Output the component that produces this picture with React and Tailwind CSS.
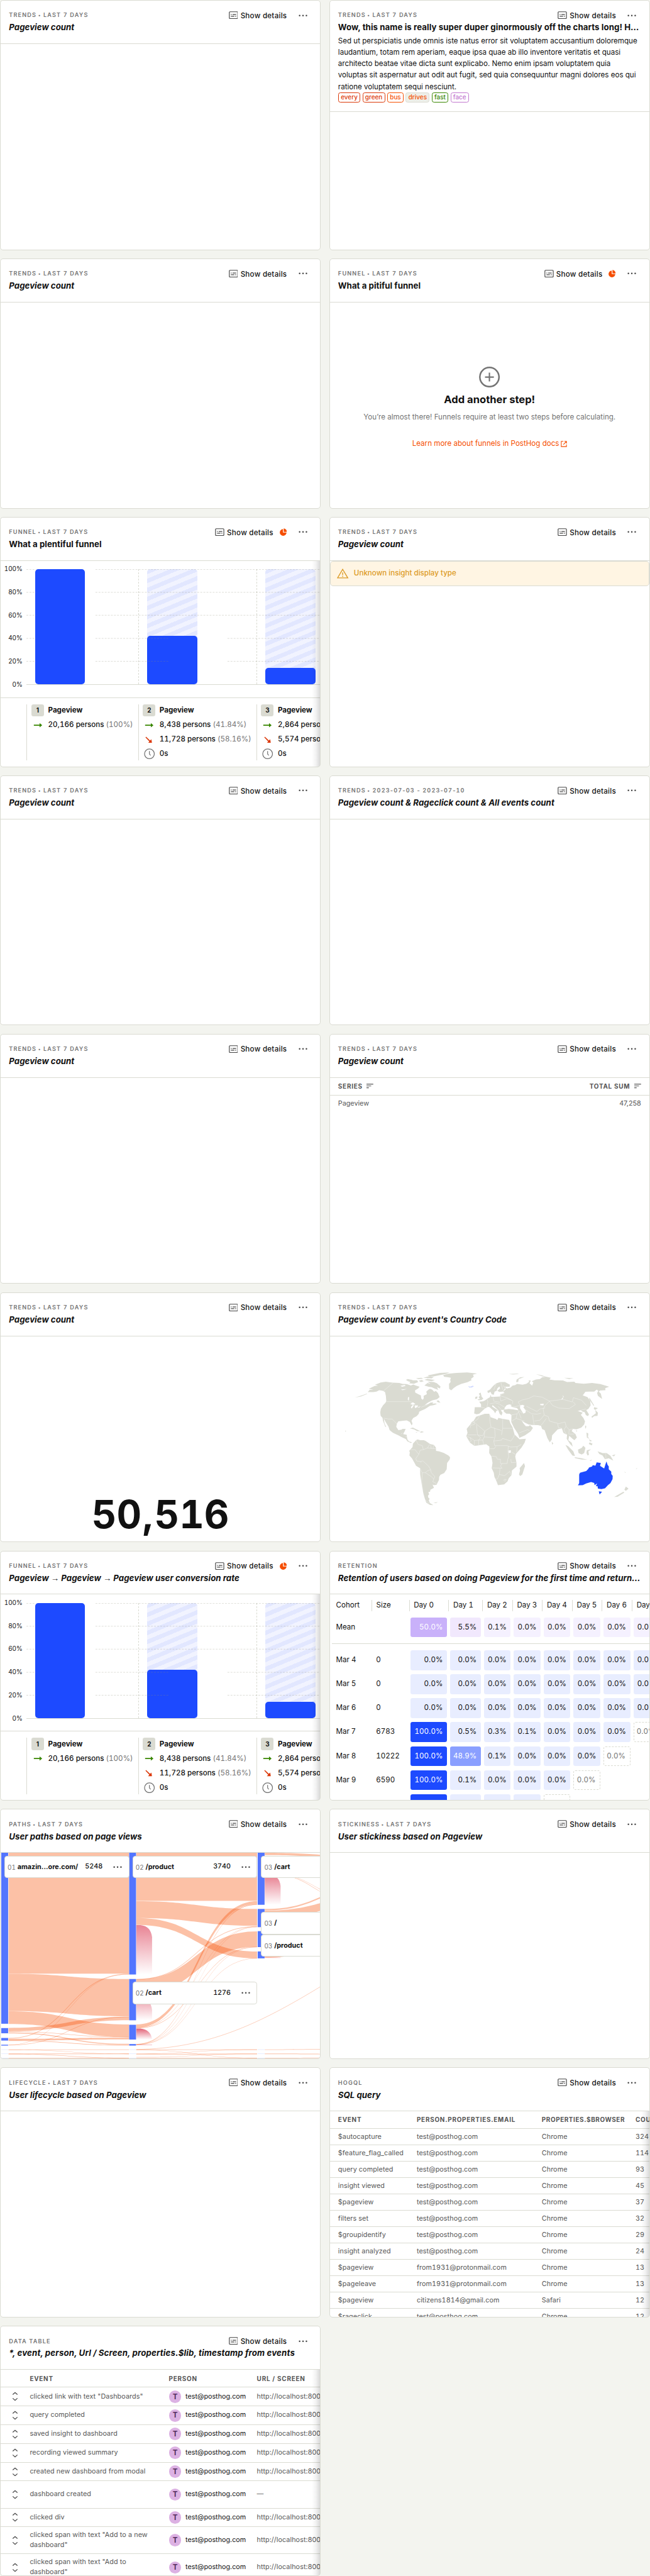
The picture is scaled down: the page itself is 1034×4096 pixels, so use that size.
import React from "react";

const DOTS = [2, 8.5, 15];

function Dots() {
  return (
    <svg width="17" height="4" viewBox="0 0 17 4" className="shrink-0" fill="#444">
      {DOTS.map((x) => (
        <circle key={x} cx={x} cy="2" r="1.5" />
      ))}
    </svg>
  );
}

function DetailsIcon() {
  return (
    <svg width="18" height="15" viewBox="0 0 18 15" fill="none" stroke="#444" strokeWidth="1.4" className="shrink-0">
      <rect x="1" y="0.9" width="16" height="13" rx="1.2" />
      <path d="M4 6.1h1.6M7.2 6.1H14M4 9.6h6.6M12.2 9.6H14" />
    </svg>
  );
}

function PieIcon() {
  return (
    <svg width="14" height="15" viewBox="0 0 14 15" fill="#f54e00" className="ml-3 shrink-0">
      <path d="M6.2 1.4v6.9h6.9A6.5 6.5 0 1 1 6.2 1.4z" />
      <path d="M7.6.3A6.2 6.2 0 0 1 13.6 6.8H7.6z" />
    </svg>
  );
}

// Sets digits with equal widths while punctuation keeps its own.
function Num({ children }) {
  return String(children)
    .split(/(\d+)/)
    .map((part, i) =>
      i % 2 ? (
        <span key={i} className="tabular-nums">
          {part}
        </span>
      ) : (
        part
      ),
    );
}

function Card({ type, range, title, custom, spacing = "tracking-[0.03px]", pie, desc, children }) {
  return (
    <section className="flex h-[480px] min-w-0 flex-col overflow-hidden rounded-[6px] border border-[#dadbd2] bg-white">
      <header className="shrink-0 border-b border-[#dadbd2] px-4 pt-4 pb-4">
        <div className="flex h-6 items-center justify-between">
          <div className="text-[11px] font-semibold tracking-[1.42px] whitespace-nowrap text-[#747474]">
            {type}
            {range ? <span className="mr-[4px] ml-[3px] text-[9px]">•</span> : null}
            {range ? <Num>{range}</Num> : null}
          </div>
          <div className="mr-[9px] flex items-center">
            <DetailsIcon />
            <span className="ml-[5px] pt-[2px] text-[14px] leading-5 font-medium tracking-[0.32px] whitespace-nowrap text-[#111]">
              Show details
            </span>
            {pie ? <PieIcon /> : null}
            <span className="ml-[22px] flex">
              <Dots />
            </span>
          </div>
        </div>
        <h4 className={"mb-[2px] truncate text-[16px] leading-6 font-bold text-[#111] " + (custom ? "" : "italic ") + spacing}>{title}</h4>
        {desc}
      </header>
      <div className="relative min-h-0 flex-1 overflow-hidden">{children}</div>
    </section>
  );
}

const LINES = [
  "Sed ut perspiciatis unde omnis iste natus error sit voluptatem accusantium doloremque",
  "laudantium, totam rem aperiam, eaque ipsa quae ab illo inventore veritatis et quasi",
  "architecto beatae vitae dicta sunt explicabo. Nemo enim ipsam voluptatem quia",
  "voluptas sit aspernatur aut odit aut fugit, sed quia consequuntur magni dolores eos qui",
  "ratione voluptatem sequi nesciunt.",
];

const TAGS = [
  ["every", "border-[#db3707] text-[#db3707]"],
  ["green", "border-[#db3707] text-[#db3707]"],
  ["bus", "border-[#f54e00] text-[#f54e00]"],
  ["drives", "border-[#dadbd2] bg-[#eeefe9] text-[#f54e00]"],
  ["fast", "border-[#388600] text-[#388600]"],
  ["face", "border-[#c278cf] text-[#c278cf]"],
];

function Description() {
  return (
    <div>
      <p className="text-[14px] leading-[22px] text-[#111]">
        {LINES.map((l) => (
          <span key={l} className="block whitespace-nowrap">
            {l}
          </span>
        ))}
      </p>
      <div className="flex gap-1">
        {TAGS.map(([t, c]) => (
          <span key={t} className={"flex h-5 items-center rounded-[4px] border px-1 text-[12px] leading-none font-medium " + c}>
            {t}
          </span>
        ))}
      </div>
    </div>
  );
}

function EmptyFunnel() {
  return (
    <div className="flex flex-col items-center pt-[123px]">
      <svg width="40" height="40" viewBox="0 0 40 40" fill="none" stroke="#747474" strokeWidth="3">
        <circle cx="20" cy="20" r="18.4" />
        <path d="M20 11.5v17M11.5 20h17" strokeWidth="2.6" />
      </svg>
      <h2 className="mt-[10px] text-[20px] leading-7 font-bold text-[#111]">Add another step!</h2>
      <p className="mt-[8px] text-[14px] leading-6 text-[#747474]">You’re almost there! Funnels require at least two steps before calculating.</p>
      <a className="mt-[27px] flex items-center gap-[3px] text-[14px] leading-6 text-[#f54e00]">
        Learn more about funnels in PostHog docs
        <svg width="12" height="12" viewBox="0 0 12 12" fill="none" stroke="#f54e00" strokeWidth="1.3">
          <path d="M5 1H1v10h10V7M7 1h4v4M11 1L5 7" />
        </svg>
      </a>
    </div>
  );
}

const STEPS = [
  { n: 1, w: "w-[214px]", h: "h-full", count: "20,166 persons", pct: "(100%)" },
  { n: 2, w: "w-[227px]", h: "h-[41.84%]", count: "8,438 persons", pct: "(41.84%)", drop: "11,728 persons", dropPct: "(58.16%)" },
  { n: 3, w: "w-[227px]", h: "h-[14.2%]", count: "2,864 persons", drop: "5,574 persons" },
];

function StepRow({ icon, text, pct }) {
  return (
    <div className="flex h-7 items-center text-[14px] font-medium whitespace-nowrap text-[#111]">
      <span className="mr-2 flex w-6 justify-center">{icon}</span>
      <span>
        <Num>{text}</Num>
        {pct ? (
          <span className="ml-1 font-normal text-[#747474]">
            <Num>{pct}</Num>
          </span>
        ) : null}
      </span>
    </div>
  );
}

const arrowRight = (
  <svg width="18" height="10" viewBox="0 0 18 10">
    <path d="M1 4h11V1l5 4-5 4V6H1z" fill="#388600" />
  </svg>
);
const arrowDown = (
  <svg width="14" height="13" viewBox="0 0 14 13">
    <path d="M1.7.5l7.6 7.4L11.8 5.3 13 12.5H5.4L8 9.6.5 1.8z" fill="#db3707" />
  </svg>
);
const clock = (
  <svg width="21" height="21" viewBox="0 0 21 21" fill="none" stroke="#747474" strokeWidth="1.5">
    <circle cx="10.5" cy="10.5" r="9.4" />
    <path d="M10.5 5v6l2.5 2.5" />
  </svg>
);

function Funnel() {
  return (
    <div className="flex h-full flex-col">
      <div className="flex h-[263px] border-b border-[#dadbd2] pt-[16px]">
        <div className="flex h-[222px] w-[50px] shrink-0 flex-col justify-between pr-2 text-right text-[12px] leading-none tabular-nums text-[#111]">
          {["100%", "80%", "60%", "40%", "20%", "0%"].map((l) => (
            <span key={l} className="flex h-0 items-center justify-end">
              {l}
            </span>
          ))}
        </div>
        <div className="relative h-[222px] flex-1 border-b border-[#dadbd2]">
          <div className="flex h-full w-[668px]">
            {STEPS.map((s) => (
              <div key={s.n} className={s.w + " shrink-0 pl-4 " + (s.n > 1 ? "border-l border-dashed border-[#dadbd2]" : "")}>
                <div
                  className={
                    "flex h-full w-[96px] items-end rounded-[6px] " +
                    (s.n > 1 ? "bg-[repeating-linear-gradient(-22.5deg,#f1f3ff_0px,#f1f3ff_8px,#e2e7ff_8px,#e2e7ff_16px)]" : "")
                  }
                >
                  <div className={s.h + " w-full rounded-[6px] bg-[#1d4aff]"} />
                </div>
              </div>
            ))}
          </div>
          <svg className="pointer-events-none absolute inset-0 h-full w-full" viewBox="0 0 564 221" preserveAspectRatio="none" stroke="#8a8c78" strokeOpacity="0.32" strokeDasharray="3 2" fill="none">
            <path d="M0 .5H16M112 .5H564M0 44.5H16M112 44.5H564M0 88.5H16M112 88.5H564M0 133H16M112 133H230M326 133H564M0 177H16M112 177H230M326 177H564" />
          </svg>
        </div>
      </div>
      <div className="flex pt-3 pl-[50px]">
        {STEPS.map((s) => (
          <div key={s.n} className={s.w + " h-[108px] shrink-0 border-l border-[#dadbd2] pl-2"}>
            <div className="flex h-6 items-center text-[14px] font-bold text-[#111]">
              <span className="mr-2 flex h-6 w-6 items-center justify-center rounded-[4px] bg-[#dadbd2] text-[12px]">{s.n}</span>
              Pageview
            </div>
            <div className="pt-[2px]">
              <StepRow icon={arrowRight} text={s.count} pct={s.pct} />
              {s.drop ? <StepRow icon={arrowDown} text={s.drop} pct={s.dropPct} /> : null}
              {s.drop ? <StepRow icon={clock} text="0s" /> : null}
            </div>
          </div>
        ))}
      </div>
      <EdgeShade />
    </div>
  );
}

function EdgeShade() {
  return <div className="absolute inset-y-0 right-0 w-4 bg-gradient-to-l from-black/15 via-black/5 to-transparent" />;
}

function Unknown() {
  return (
    <div className="flex h-[48px] items-center rounded-[6px] border border-[#dadbd2] bg-[#fff5e3] pl-[13px] text-[14px] font-medium text-[#dc9a25]">
      <svg width="22" height="19" viewBox="0 0 22 19" fill="none" stroke="#dc9a25" strokeWidth="1.7" className="mr-[10px]">
        <path d="M11 1.5L20.8 18H1.2z" />
        <path d="M11 7.5v5M11 14v2" />
      </svg>
      Unknown insight display type
    </div>
  );
}

function SortIcon() {
  return (
    <svg width="13" height="9" viewBox="0 0 13 9" stroke="#555" strokeWidth="1.4" className="ml-[8px]">
      <path d="M0 1h13M0 4.5h9M0 8h4.5" />
    </svg>
  );
}

function Totals() {
  return (
    <div className="text-[#555]">
      <div className="flex h-[34px] items-center justify-between border-b border-[#dadbd2] px-4 text-[12px] font-bold tracking-[0.9px]">
        <span className="flex items-center">
          SERIES <SortIcon />
        </span>
        <span className="flex items-center">
          TOTAL SUM <SortIcon />
        </span>
      </div>
      <div className="flex h-[32px] items-center justify-between px-4 text-[13px]">
        <span>Pageview</span>
        <span>47,258</span>
      </div>
    </div>
  );
}

const LAND = [
  "M213,603 222,590 240,588 218,584 246,568 262,566 248,560 275,548 300,543 320,547 335,549 365,550 380,556 400,557 420,565 432,559 445,566 462,572 455,582 440,593 441,606 455,615 468,622 470,640 477,647 482,638 481,625 497,615 494,600 505,588 512,584 522,588 532,601 540,597 550,608 558,632 545,645 524,650 503,663 486,678 504,672 514,664 527,662 524,670 538,668 545,672 530,678 512,682 495,695 486,702 470,710 460,716 458,728 448,742 431,753 423,768 428,785 424,795 415,775 400,766 385,768 360,772 353,784 350,803 360,822 375,820 380,815 395,815 390,830 383,845 400,850 403,875 411,888 425,892 421,897 404,888 396,874 375,862 360,852 334,838 318,822 313,803 299,775 290,755 294,785 302,805 297,802 286,768 284,752 275,740 273,720 276,700 286,680 298,665 302,655 300,625 296,603 286,596 268,592 255,600 240,603Z",
  "M575,505 600,497 640,492 690,490 738,496 718,502 722,514 708,528 712,534 692,546 662,556 640,568 625,580 614,593 604,585 603,556 611,545 609,532 612,520 596,517 580,515Z",
  "M543,655 552,650 562,664 550,662Z M485,565 500,550 515,555 500,543 530,545 545,552 562,570 560,582 545,575 552,590 535,583 520,575 505,572Z",
  "M400,538 420,530 430,535 450,535 455,545 435,555 412,552 418,545Z M395,533 405,528 418,530 404,536Z M458,538 472,533 482,540 468,545Z M445,523 470,520 480,526 455,528Z M480,520 505,512 530,516 520,524 500,522Z M500,507 530,500 560,492 605,490 590,498 560,505 530,512 512,513Z M485,532 500,527 535,533 520,540 500,537Z",
  "M415,812 430,808 450,820 466,829 450,828 435,818Z M462,834 472,829 483,833 470,837Z M443,833 452,835 446,837Z M150,635 180,624 208,612 210,614 180,628Z M104,825 110,828 106,831Z",
  "M445,880 452,876 465,880 482,880 490,884 500,892 512,902 530,908 540,922 541,942 556,945 578,954 600,968 608,978 607,990 594,1012 592,1048 580,1070 562,1080 556,1092 555,1110 543,1138 530,1140 524,1136 531,1155 514,1166 512,1178 504,1180 508,1192 502,1200 504,1212 510,1218 506,1228 511,1242 528,1255 512,1254 494,1240 486,1215 480,1190 474,1150 470,1120 465,1080 464,1042 445,1028 437,1010 425,985 413,968 415,950 412,942 417,935 428,920 430,900Z",
  "M752,737 775,728 797,728 803,748 828,758 835,764 840,752 860,757 892,763 898,784 908,805 918,848 942,875 972,872 966,895 950,925 925,958 921,975 927,1010 927,1033 905,1055 903,1082 890,1100 884,1118 868,1135 838,1140 832,1120 821,1092 818,1068 808,1042 812,1012 807,975 796,955 797,918 782,904 745,910 725,913 704,895 686,858 692,838 688,815 705,790 712,776 722,768 733,745Z",
  "M963,1012 968,1030 955,1078 945,1087 939,1078 944,1055 942,1042Z",
  "M727,690 757,690 757,674 748,658 765,656 775,652 786,642 800,632 802,618 806,630 820,630 848,628 850,614 870,608 862,600 875,587 868,570 852,548 868,556 895,560 894,572 872,572 880,582 898,578 908,566 920,563 930,556 956,560 975,555 988,543 985,535 996,537 990,552 1002,566 1008,548 1000,540 1020,530 1040,528 1050,518 1068,514 1092,520 1085,530 1110,535 1150,536 1170,545 1205,543 1210,550 1250,555 1290,550 1330,557 1372,572 1353,580 1354,592 1328,594 1322,600 1332,612 1338,643 1318,625 1314,608 1320,596 1312,588 1300,600 1275,600 1258,601 1245,622 1268,632 1281,655 1283,680 1272,700 1262,706 1275,732 1270,742 1260,735 1254,718 1245,716 1235,708 1222,713 1245,722 1236,734 1248,752 1256,772 1252,790 1238,808 1215,818 1198,815 1192,828 1210,845 1217,865 1205,880 1196,872 1180,855 1176,880 1192,895 1197,918 1184,902 1168,872 1170,848 1162,845 1152,838 1145,812 1125,818 1098,852 1096,878 1087,893 1075,868 1062,822 1050,816 1045,798 1030,793 1000,792 985,790 968,780 952,768 962,786 972,800 985,800 992,793 1006,810 995,830 968,852 941,867 935,845 915,808 902,775 903,735 895,728 878,727 866,715 866,704 890,700 910,703 937,708 930,695 908,690 898,682 905,678 893,674 880,678 872,690 868,704 852,708 860,722 855,738 846,728 840,708 822,688 812,678 810,686 838,708 830,712 825,725 818,712 798,690 790,688 775,698 757,718 748,728 735,731 724,726Z",
  "M787,597 800,588 815,568 830,552 850,545 872,545 895,560 885,565 862,560 872,582 862,600 845,602 835,596 848,582 845,570 835,582 832,596 822,600 818,618 808,616 803,602 790,608Z",
  "M740,645 752,642 745,632 752,625 746,612 755,606 760,630 768,640 760,648 745,650Z M730,630 740,628 738,640 728,643Z",
  "M925,545 928,530 945,518 965,516 938,528 935,545Z M1020,499 1050,507 1070,515 1050,512Z M1155,520 1200,523 1180,528Z M890,499 930,497 940,499 910,501Z",
  "M1277,635 1300,680 1297,682 1276,645Z M1300,690 1318,695 1305,705 1298,700Z M1305,705 1318,722 1316,740 1300,742 1290,752 1287,744 1308,725Z",
  "M1258,795 1262,800 1260,815 1256,805Z M1212,825 1218,824 1216,832Z M1263,836 1272,842 1270,862 1278,872 1265,866Z M1278,893 1292,900 1288,910 1274,902Z M1275,875 1290,885 1280,888Z M1096,888 1104,900 1098,906Z",
  "M1162,908 1175,915 1200,945 1208,972 1195,968 1175,935Z M1206,978 1240,985 1268,993 1240,992 1208,984Z M1222,935 1240,925 1248,912 1258,925 1252,955 1240,963 1225,955Z M1265,938 1285,933 1272,945 1275,965 1268,968 1263,955Z M1316,945 1330,950 1340,955 1360,955 1378,970 1392,998 1370,985 1352,990 1340,968 1325,960Z M1278,998 1290,992 1284,1000Z M1385,968 1402,962 1395,974Z",
  "M1452,1148 1465,1160 1452,1172 1445,1166Z M1440,1178 1445,1182 1412,1207 1396,1208Z M1500,1045 1507,1040 1504,1046Z M1444,1060 1452,1068 1450,1070Z M528,1240 550,1238 540,1243Z",
];

const LAKES = "M945,680 956,676 966,682 960,690 972,710 970,722 960,727 952,712 944,695Z M1040,672 1058,670 1056,680 1042,678Z M417,672 430,662 442,672 430,676Z M430,676 434,680 424,698 420,690Z M438,680 455,680 450,690 440,695Z M450,692 468,685 460,692Z M370,567 390,562 395,568 378,572Z M372,588 402,585 380,592Z M407,632 412,632 410,655 405,645Z M1148,622 1154,628 1148,645 1142,645 1152,632Z M888,940 900,938 900,952 890,955Z";

const BORDERS =
  "M288,597L335,549M302,658H418L432,668M470,690L500,676M290,753L312,758 330,758 352,785M372,845L380,838M393,858L404,862M413,935L440,935 458,962 444,985 447,1000 465,1003 470,1010M445,880L455,905 475,912 480,935 465,938 458,962M480,935L500,925 510,905M515,908L518,930M528,910L527,930M500,925L540,930M465,1003L478,1000 505,1030 515,1050 498,1058 490,1068 475,1068M515,1050L518,1068 535,1090 530,1105 525,1120M490,1068L518,1090 530,1105M464,1042L470,1060 475,1068 472,1120 478,1180 488,1225 508,1245M525,1120L543,1130" +
  "M752,737L740,760 722,775 690,803M722,775L725,790 706,795 705,810M722,775L775,828M797,728L800,775 805,805 775,828 765,855 740,850 735,792M735,850H692M805,805L855,825M861,758V812H908M861,812L855,850M822,810L825,855 818,885M775,828L772,862 765,880 770,905M818,865L780,862 772,862M765,880L745,880 745,910M725,882L725,912M705,865L710,885 700,890M740,850L755,865 745,880 725,882 705,865 686,858M818,885L855,880 860,870 900,885 910,868 918,848M818,885L822,912 850,912 883,912 898,920 930,918 950,905M797,930H820L828,915M808,972L830,975 835,990 850,990 850,1015 882,1015 885,990 890,975 886,945 888,915M812,1040L858,1042M858,1015L850,1030 858,1042M848,1045L845,1078 835,1105 825,1105M845,1078L870,1085 895,1060 900,1080M900,990L902,1010 925,1008M905,950L922,962M930,918L928,950M870,1105L878,1108 872,1118 866,1112Z" +
  "M757,690L775,695M785,642L790,660 785,690M815,632L818,655 848,662M800,670L825,665 845,672M848,628L852,655 880,640 905,650M850,614L865,612M845,672L870,690M838,685L858,708M862,600L850,625 880,635 910,655 908,670M852,548L862,590M830,552L818,590M935,660L955,648 985,640 1010,625 1050,632 1085,655 1118,650 1150,645 1195,660 1200,635 1240,650 1262,680M1085,655L1100,680 1130,695 1180,698 1210,675 1200,660M935,660L945,680M1085,655L1065,680 1055,700 1060,735M975,685L1000,700 1025,715 1040,700 1065,695M970,705L1000,728 1025,730 1045,725M1005,735L1008,770 1012,792M1060,735L1040,765 1012,770M1060,735L1080,745 1085,770 1130,785 1160,775 1165,800 1180,820 1198,815M1045,795L1055,780 1070,755M1125,785L1128,808 1145,812M903,735L930,728 940,712 955,725M930,728L925,755 905,770M925,755L965,770M935,712L950,755M940,838L980,820 990,825M1165,800L1155,820 1165,845M1180,820L1178,845 1205,845M1222,713L1260,700M1356,957V990M950,680L905,690";

const AUSTRALIA =
  "M1228,1078 1232,1068 1262,1058 1272,1045 1275,1038 1290,1032 1293,1025 1306,1027 1312,1008 1332,1012 1328,1028 1348,1044 1354,1020 1359,1003 1364,1022 1370,1032 1370,1048 1382,1062 1382,1075 1389,1086 1388,1105 1378,1128 1366,1140 1352,1158 1335,1162 1318,1160 1316,1145 1308,1146 1314,1130 1302,1140 1300,1127 1285,1122 1262,1130 1245,1140 1222,1141 1228,1128 1228,1105Z M1322,1175 1338,1178 1326,1193Z";

function WorldMap() {
  return (
    <svg className="h-full w-full" viewBox="32 282 1534 1185" preserveAspectRatio="none">
      {LAND.map((d) => (
        <path key={d} d={d} fill="#dadbd2" />
      ))}
      <path d={LAKES} fill="#fff" />
      <path d={BORDERS} fill="none" stroke="#fff" strokeOpacity="0.75" strokeWidth="0.6" vectorEffect="non-scaling-stroke" />
      <path d="M695,568 704,572 718,566 722,570 712,577 700,577Z" fill="#d0d9ff" />
      <path d={AUSTRALIA} fill="#1d4aff" />
    </svg>
  );
}

const DAYS = ["Day 0", "Day 1", "Day 2", "Day 3", "Day 4", "Day 5", "Day 6", "Day 7"];
const DAY_W = ["w-[76px]", "w-[65px]", "w-[57.4px]", "w-[57.4px]", "w-[57.4px]", "w-[57.4px]", "w-[57.4px]", "w-[57.4px]"];
const Z = "0.0%";
const COHORTS = [
  ["Mar 4", "0", [Z, Z, Z, Z, Z, Z, Z, Z], 9],
  ["Mar 5", "0", [Z, Z, Z, Z, Z, Z, Z, Z], 9],
  ["Mar 6", "0", [Z, Z, Z, Z, Z, Z, Z, Z], 9],
  ["Mar 7", "6783", ["100.0%", "0.5%", "0.3%", "0.1%", Z, Z, Z, Z], 7],
  ["Mar 8", "10222", ["100.0%", "48.9%", "0.1%", Z, Z, Z, Z], 6],
  ["Mar 9", "6590", ["100.0%", "0.1%", Z, Z, Z, Z], 5],
  ["", "", ["", "", "", "", ""], 4],
];

function blueTone(value, day, dashed, size) {
  if (dashed) return "border border-dashed border-[#dadbd2] text-[#747474]";
  if (day === 0 && size !== "0") return "bg-[#1d4aff] text-white";
  if (value === "48.9%") return "bg-[#8a9fff] text-white";
  return "bg-[#e8edff] text-[#111]";
}

function Cell({ w, tone, children }) {
  return (
    <div className={w + " shrink-0 px-[3px] py-1"}>
      <div className={"flex h-[38px] items-center justify-end rounded-[4px] pr-2 " + tone}>
        <span>
          <Num>{children}</Num>
        </span>
      </div>
    </div>
  );
}

function Retention() {
  const mean = ["50.0%", "5.5%", "0.1%", Z, Z, Z, Z, Z];
  return (
    <div className="ml-[4px] w-[700px] pt-[10px] text-[14px] text-[#111]">
      <div className="flex h-[22px] items-center tabular-nums">
        <div className="w-[76px] pl-2">Cohort</div>
        <div className="flex h-full w-[72px] items-center border-l border-[#dadbd2] pl-2">Size</div>
        {DAYS.map((d, i) => (
          <div key={d} className={DAY_W[i] + " flex h-full shrink-0 items-center border-l border-[#dadbd2] pl-2 whitespace-nowrap"}>
            {d}
          </div>
        ))}
      </div>
      <div className="flex h-[63px] items-center border-b border-[#dadbd2]">
        <div className="w-[148px] pl-2">Mean</div>
        {mean.map((v, i) => (
          <Cell key={i} w={DAY_W[i]} tone={i === 0 ? "bg-[#c9b1fa] text-white" : i === 1 ? "bg-[#f1e8fd]" : "bg-[#f5f1ff]"}>
            {v}
          </Cell>
        ))}
      </div>
      <div className="pt-2">
        {COHORTS.map(([name, size, vals, dashAt], r) => (
          <div key={r} className="flex h-[46px] items-center">
            <div className="w-[76px] pl-2">{name}</div>
            <div className="w-[72px] pl-[9px] tabular-nums">{size}</div>
            {vals.map((v, i) => (
              <Cell key={i} w={DAY_W[i]} tone={blueTone(v, i, i >= dashAt, size)}>
                {v}
              </Cell>
            ))}
          </div>
        ))}
      </div>
    </div>
  );
}

// [x0, y0, x1, y1, thickness] for every flow between two columns
const FLOWS = [
  [40, 288, 618, 288, 697],
  [40, 986, 618, 1016, 215],
  [40, 1202, 618, 1278, 73],
  [40, 1298, 618, 1234, 20],
  [40, 1319, 618, 1350, 3],
  [40, 1324, 618, 1390, 6],
  [40, 1356, 618, 985, 4],
  [40, 1361, 618, 1354, 10],
  [40, 1370, 618, 1397, 3],
  [40, 1395, 618, 988, 1.5],
  [40, 1396, 618, 1233, 2.5],
  [40, 1422, 618, 1422, 2.5],
  [40, 1423, 618, 1447, 2],
  [40, 1446, 618, 1446, 3],
  [40, 1448, 618, 1471, 2],
  [40, 1470, 618, 1470, 3],
  [653, 288, 1233, 288, 277],
  [653, 567, 1233, 612, 97],
  [653, 664, 1233, 857, 40],
  [653, 1016, 1233, 711, 4],
  [653, 1018, 1233, 741, 89],
  [653, 1278, 1233, 567, 17],
  [653, 1294, 1233, 586, 2],
  [653, 1296, 1233, 713, 2],
  [653, 1298, 1233, 829, 3],
  [653, 1391, 1233, 584, 3],
  [653, 1392, 1233, 715, 2],
  [653, 1393, 1233, 831, 2],
  [653, 1394, 1233, 896, 2],
  [653, 1422, 1233, 1422, 3],
  [653, 1424, 1233, 1471, 2],
  [653, 1446, 1233, 1422, 2],
  [653, 1448, 1233, 1447, 3],
  [653, 1466, 1233, 1446, 2],
  [653, 1470, 1233, 1470, 3],
  [1270, 288, 1890, 320, 14],
  [1270, 400, 1750, 560, 2.5],
  [1270, 403, 1750, 580, 2.5],
  [1270, 612, 1790, 480, 8],
  [1270, 622, 1790, 540, 44],
  [1270, 886, 1500, 860, 8],
  [1270, 1422, 1890, 1415, 2.5],
  [1270, 1446, 1890, 1450, 3],
  [1270, 1470, 1890, 1468, 3],
];

function flowPath([x0, y0, x1, y1, t]) {
  const m = (x0 + x1) / 2;
  return `M${x0},${y0}C${m},${y0} ${m},${y1} ${x1},${y1}V${y1 + t}C${m},${y1 + t} ${m},${y0 + t} ${x0},${y0 + t}Z`;
}

const BLOCKS = [
  [5, 288, 986], [5, 1299, 30], [5, 1356, 15], [5, 1395, 5],
  [619, 288, 702], [619, 1016, 238], [619, 1280, 85], [619, 1391, 9],
  [1236, 288, 300], [1236, 612, 105], [1236, 740, 92], [1236, 857, 40],
];
const FAINT = [[5, 1422], [5, 1446], [5, 1470], [619, 1422], [619, 1446], [619, 1470], [1236, 1422], [1236, 1446], [1236, 1470]];
const DROPS = [
  [653, 705, 285, 0.55], [653, 1125, 129, 0.45], [653, 1302, 63, 0.7], [653, 1395, 2.5, 0.6],
  [1270, 410, 178, 0.6], [1270, 893, 3, 0.5],
];

const NODES = [
  { pos: "left-[7px] top-[5px] w-[240px]", n: "01", name: "amazin...ore.com/", v: "5248" },
  { pos: "left-[253px] top-[5px] w-[240px]", n: "02", name: "/product", v: "3740" },
  { pos: "left-[500px] top-[5px] w-[240px]", n: "03", name: "/cart" },
  { pos: "left-[500px] top-[113px] w-[240px]", n: "03", name: "/" },
  { pos: "left-[500px] top-[156px] w-[240px]", n: "03", name: "/product" },
  { pos: "left-[253px] top-[247px] w-[240px]", n: "02", name: "/cart", v: "1276" },
];

function Paths() {
  return (
    <>
      <svg className="h-full w-full" viewBox="2 288 1534 1185" preserveAspectRatio="none">
        <defs>
          <linearGradient id="drop" x1="0" y1="0" x2="0" y2="1">
            <stop offset="0" stopColor="#d61f3c" />
            <stop offset="1" stopColor="#d61f3c" stopOpacity="0" />
          </linearGradient>
        </defs>
        {FLOWS.map((f, i) => (
          <path key={i} d={flowPath(f)} fill="#f54e00" fillOpacity="0.35" />
        ))}
        <path d="M653,1422C1000,1418 1250,1270 1540,1058" fill="none" stroke="#f54e00" strokeOpacity="0.35" strokeWidth="2.5" />
        {DROPS.map(([x, y, h, o], i) => (
          <path key={i} d={`M${x},${y}h${h > 10 ? 20 : 76}${h > 10 ? `q50,6 56,${Math.min(h, 70)}` : ""}V${y + h}H${x}Z`} fill="url(#drop)" opacity={o} />
        ))}
        {BLOCKS.map(([x, y, h], i) => (
          <rect key={i} x={x} y={y} width="33" height={h} fill="#5375ff" />
        ))}
        {FAINT.map(([x, y], i) => (
          <rect key={i} x={x} y={y} width="33" height="2.5" fill="#dfe5ff" />
        ))}
      </svg>
      {NODES.map((n) => (
        <div key={n.pos} className={n.pos + " absolute flex h-[43px] items-center rounded-[5px] border border-[#dadbd2] bg-white pr-[13px] pl-[5px] text-[12px] tabular-nums text-[#111]"}>
          <span className="w-[16px] shrink-0 pt-[2px] text-[#747474]">{n.n}</span>
          <span className="ml-[3px] pt-[1px] text-[13px] font-bold proportional-nums">{n.name}</span>
          <span className="mr-[20px] ml-auto text-[13px] font-medium">{n.v}</span>
          <Dots />
        </div>
      ))}
    </>
  );
}

const T = "test@posthog.com";
const P = "from1931@protonmail.com";
const SQL = [
  ["$autocapture", T, "Chrome", "324"],
  ["$feature_flag_called", T, "Chrome", "114"],
  ["query completed", T, "Chrome", "93"],
  ["insight viewed", T, "Chrome", "45"],
  ["$pageview", T, "Chrome", "37"],
  ["filters set", T, "Chrome", "32"],
  ["$groupidentify", T, "Chrome", "29"],
  ["insight analyzed", T, "Chrome", "24"],
  ["$pageview", P, "Chrome", "13"],
  ["$pageleave", P, "Chrome", "13"],
  ["$pageview", "citizens1814@gmail.com", "Safari", "12"],
  ["$rageclick", T, "Chrome", "12"],
];

function SqlTable() {
  return (
    <div className="w-[720px] text-[13px] tracking-[0.1px] text-[#555]">
      <div className="grid h-[34px] grid-cols-[151px_240px_180px_140px] items-center border-b border-[#dadbd2] pl-4 text-[12px] font-bold tracking-[0.9px]">
        <span>EVENT</span>
        <span>PERSON.PROPERTIES.EMAIL</span>
        <span className="tracking-[0.7px]">PROPERTIES.$BROWSER</span>
        <span>COUNT()</span>
      </div>
      {SQL.map((r, i) => (
        <div key={i} className="grid h-[31.4px] grid-cols-[151px_240px_180px_140px] items-center border-b border-[#dadbd2] pl-4">
          {r.map((c, j) => (
            <span key={j}>
              <Num>{c}</Num>
            </span>
          ))}
        </div>
      ))}
      <EdgeShade />
    </div>
  );
}

const EVENTS = [
  ['clicked link with text "Dashboards"', 1, "h-9"],
  ["query completed", 1, "h-9"],
  ["saved insight to dashboard", 1, "h-9"],
  ["recording viewed summary", 1, "h-9"],
  ["created new dashboard from modal", 1, "h-9"],
  ["dashboard created", 0, "h-[52px]"],
  ["clicked div", 1, "h-9"],
  ['clicked span with text "Add to a new dashboard"', 1, "h-[52px]"],
  ['clicked span with text "Add to dashboard"', 1, "h-[52px]"],
];

function EventsTable() {
  return (
    <div className="w-[760px] text-[13px] leading-5 tracking-[0.1px] text-[#555]">
      <div className="grid h-[34px] grid-cols-[56px_267px_169px_1fr] items-center border-b border-[#dadbd2] text-[12px] font-bold tracking-[0.9px]">
        <span />
        <span>EVENT</span>
        <span>PERSON</span>
        <span>URL / SCREEN</span>
      </div>
      {EVENTS.map(([name, url, h], i) => (
        <div key={i} className={h + " grid grid-cols-[56px_267px_169px_1fr] items-center border-b border-[#dadbd2]"}>
          <svg width="12" height="18" viewBox="0 0 12 18" fill="none" stroke="#444" strokeWidth="1.5" className="ml-[22px]">
            <path d="M1.5 5.500L6 1.500l4.500 4M1.500 12.500L6 16.500l4.500-4" />
          </svg>
          <span className="pr-6">{name}</span>
          <span className="flex items-center tracking-[0px] text-[#111]">
            <span className="mr-2 flex h-6 w-6 items-center justify-center rounded-full bg-[#dcb1e3] text-[14px] font-bold text-[#572e5e]">T</span>
            {T}
          </span>
          <span className="whitespace-nowrap">{url ? "http://localhost:8000/dashboard" : "—"}</span>
        </div>
      ))}
      <EdgeShade />
    </div>
  );
}

const WEEK = "LAST 7 DAYS";

function Arrow() {
  return <span className="font-['Liberation_Sans'] font-normal not-italic">→</span>;
}

export default function App() {
  return (
    <main className="h-[4096px] w-[1034px] overflow-hidden bg-[#f3f4ef] font-['Inter',sans-serif] [font-optical-sizing:none]">
      <div className="grid w-[1248px] grid-cols-2 gap-4 [zoom:0.8285]">
        <Card type="TRENDS" range={WEEK} title="Pageview count" />
        <Card
          type="TRENDS"
          range={WEEK}
          custom
          spacing="tracking-[0.08px]"
          title="Wow, this name is really super duper ginormously off the charts long! How did it even get like this"
          desc={<Description />}
        />
        <Card type="TRENDS" range={WEEK} title="Pageview count" />
        <Card type="FUNNEL" range={WEEK} custom pie title="What a pitiful funnel">
          <EmptyFunnel />
        </Card>
        <Card type="FUNNEL" range={WEEK} custom pie title="What a plentiful funnel">
          <Funnel />
        </Card>
        <Card type="TRENDS" range={WEEK} title="Pageview count">
          <Unknown />
        </Card>
        <Card type="TRENDS" range={WEEK} title="Pageview count" />
        <Card type="TRENDS" range="2023-07-03 - 2023-07-10" title="Pageview count & Rageclick count & All events count" />
        <Card type="TRENDS" range={WEEK} title="Pageview count" />
        <Card type="TRENDS" range={WEEK} title="Pageview count">
          <Totals />
        </Card>
        <Card type="TRENDS" range={WEEK} title="Pageview count">
          <div className="flex h-full items-end justify-center pb-[25px] text-[74px] leading-[54px] font-bold text-[#111]">
            <span>
              <Num>50,516</Num>
            </span>
          </div>
        </Card>
        <Card type="TRENDS" range={WEEK} title="Pageview count by event's Country Code">
          <WorldMap />
        </Card>
        <Card
          type="FUNNEL"
          range={WEEK}
          pie
          title={
            <>
              Pageview <Arrow /> Pageview <Arrow /> Pageview user conversion rate
            </>
          }
        >
          <Funnel />
        </Card>
        <Card type="RETENTION" title="Retention of users based on doing Pageview for the first time and returning with the same event">
          <Retention />
        </Card>
        <Card type="PATHS" range={WEEK} title="User paths based on page views">
          <Paths />
        </Card>
        <Card type="STICKINESS" range={WEEK} title="User stickiness based on Pageview" />
        <Card type="LIFECYCLE" range={WEEK} title="User lifecycle based on Pageview" />
        <Card type="HOGQL" title="SQL query">
          <SqlTable />
        </Card>
        <Card type="DATA TABLE" spacing="tracking-[0.18px]" title="*, event, person, Url / Screen, properties.$lib, timestamp from events">
          <EventsTable />
        </Card>
      </div>
    </main>
  );
}
